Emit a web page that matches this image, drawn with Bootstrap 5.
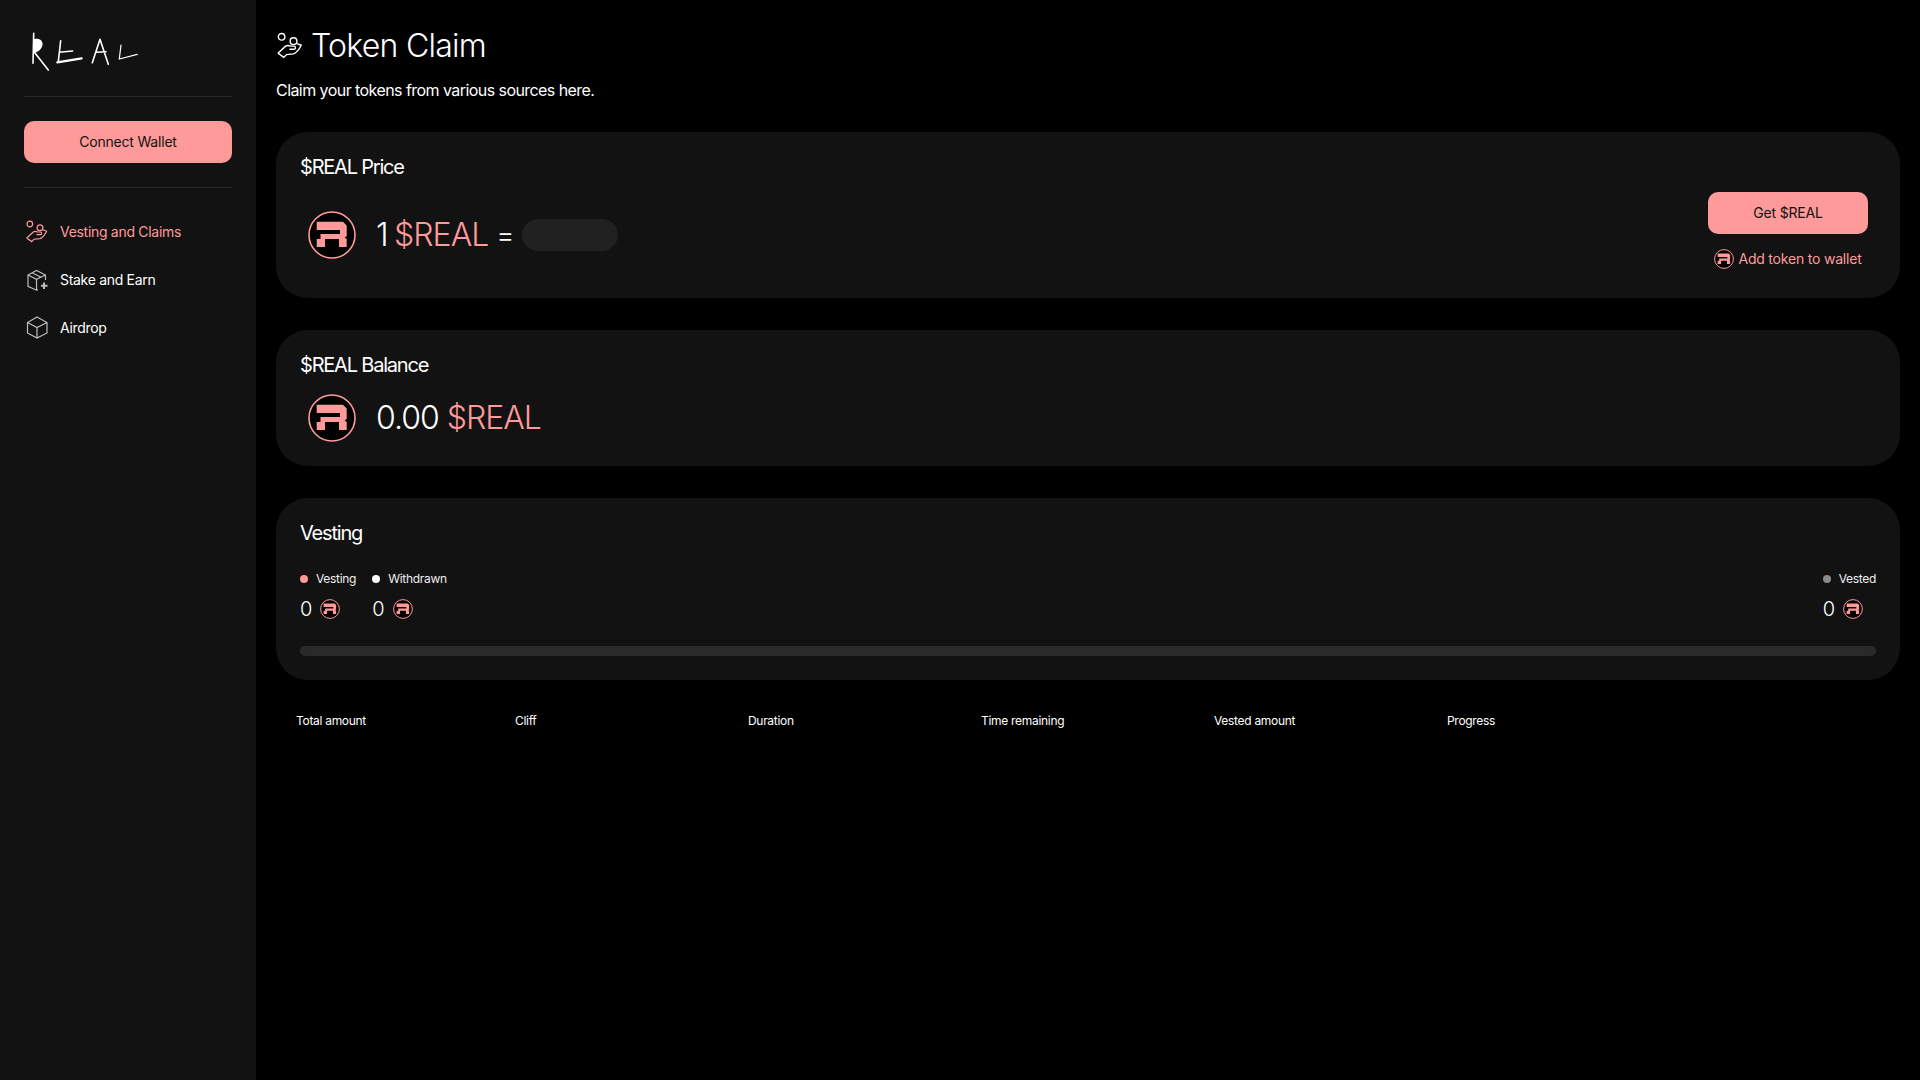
<!DOCTYPE html>
<html lang="en">
<head>
<meta charset="utf-8">
<title>Token Claim</title>
<link href="https://cdn.jsdelivr.net/npm/bootstrap@5.3.0/dist/css/bootstrap.min.css" rel="stylesheet">
<style>
:root { --pink: #ff9a9a; --panel: #121212; }
html, body { background: #000; color: #fff; font-family: Inter, "Liberation Sans", sans-serif; height: 100%; }
.shell { min-height: 1080px; }
.side { width: 256px; flex: 0 0 256px; background: var(--panel); padding: 24px; }
.side-logo { height: 72px; }
.side-logo svg { display: block; margin-top: 3px; }
.side-rule { border-top: 1px solid #2a2a2a; height: 0; }
.btn-pink { background: var(--pink); color: #121212; border: 0; border-radius: 10px; height: 42px; font-size: 14px; letter-spacing: -.2px; display: flex; align-items: center; justify-content: center; padding-bottom: 7px; }
.btn-pink:hover { background: var(--pink); color: #121212; }
.side-btn { margin: 24px 0; width: 208px; }
.side-nav { padding-top: 29px; gap: 20px; }
.side-link { display: flex; align-items: center; gap: 11px; height: 28px; padding-left: 1px; color: #fff; font-size: 14px; letter-spacing: -.3px; text-decoration: none; }
.side-link.on { color: var(--pink); }
.side-link svg { width: 24px; height: 24px; flex: none; fill: none; stroke: #bdbdbd; stroke-width: 1.2; }
.side-link.on svg { stroke: var(--pink); }
.main-col { padding: 0 20px; min-width: 0; }
.page-head { height: 78px; padding-top: 27px; gap: 7px; }
.page-head svg { width: 28px; height: 28px; fill: none; stroke: #fff; stroke-width: 1.2; }
.page-head h1 { font-size: 32px; line-height: 38px; font-weight: 300; letter-spacing: -.75px; margin: 0; }
.page-sub { font-size: 16px; line-height: 24px; letter-spacing: -.56px; margin: 0 0 30px; }
.panel-box { background: var(--panel); border-radius: 32px; padding: 23px 24px 24px; margin-bottom: 32px; }
.price-box { padding-bottom: 29px; }
.box-title { font-size: 20px; line-height: 24px; letter-spacing: -1.2px; margin: 0; font-weight: 400; }
.coin { display: block; flex: none; }
.big-val { font-size: 32px; line-height: 48px; letter-spacing: -1px; font-weight: 300; }
.tight-gap { word-spacing: -1.5px; }
.pink-txt { color: var(--pink); }
.price-row { padding-left: 8px; margin-top: 32px; gap: 20px; }
.eq { font-size: 28px; font-weight: 300; margin: 0 7px 0 8px; }
.skeleton { width: 96px; height: 32px; border-radius: 16px; background: #212121; }
.buy-col { width: 160px; margin-right: 8px; margin-top: 37px; }
.buy-btn { width: 160px; }
.add-link { color: var(--pink); font-size: 14px; letter-spacing: -.2px; text-decoration: none; display: flex; gap: 4px; align-items: center; justify-content: center; margin-top: 14px; white-space: nowrap; }
.bal-row { padding-left: 8px; margin-top: 17px; gap: 20px; }
.legend-lab { font-size: 12px; line-height: 16px; letter-spacing: -.3px; color: #eee; display: flex; align-items: center; gap: 8px; }
.dot { width: 8px; height: 8px; border-radius: 50%; display: block; }
.dot-v { background: var(--pink); }
.dot-w { background: #fff; }
.dot-g { background: #8a8a8a; }
.legend-val { font-size: 20px; line-height: 24px; font-weight: 300; display: flex; align-items: center; gap: 8px; margin-top: 10px; }
.vest-top { margin-top: 26px; }
.vest-items { gap: 16px; }
.track { height: 10px; border-radius: 5px; background: #2a2a2a; margin-top: 25px; }
.claims { --bs-table-bg: transparent; --bs-table-color: #fff; table-layout: fixed; width: 100%; margin: 0; }
.claims th { font-size: 12px; font-weight: 400; letter-spacing: -.3px; padding: 0 0 0 20px; border: 0; line-height: 16px; }
.vest-box { margin-bottom: 0; }
.table-wrap { padding-top: 33px; }
.w1 { width: 219px; } .w2 { width: 233px; }
</style>
</head>
<body>
<svg width="0" height="0" class="d-block" aria-hidden="true">
  <symbol id="coin" viewBox="0 0 48 48">
    <circle cx="24" cy="24" r="23" fill="#000" stroke="#ff9a9a" stroke-width="1.6"/>
    <path fill="#ff9a9a" d="M8.700 10.700H35L38.700 14.500V25L36.700 26.500L38.700 28V36H31V28H17V36H8.700V28H12.500V23H32V19H8.700Z"/>
  </symbol>
  <symbol id="coin-s" viewBox="0 0 48 48">
    <circle cx="24" cy="24" r="22.500" fill="#000" stroke="#ff9a9a" stroke-width="2.400"/>
    <path fill="#ff9a9a" d="M8.700 10.700H35L38.700 14.500V25L36.700 26.500L38.700 28V36H31V28H17V36H8.700V28H12.500V23H32V19H8.700Z"/>
  </symbol>
  <symbol id="hand" viewBox="0 0 24 24">
    <circle cx="4.800" cy="5" r="2.800"/>
    <circle cx="15" cy="8.700" r="2.900"/>
    <path d="M1.700 19L8 13.200C9.500 12 11 12.200 12.500 13H15.500C17 13 17 15.600 15.500 15.600H11.500M18 10.800L21.600 12.200C20 15.500 18 18.500 15 19.600L9 20.200L6.700 22.600L1.700 19"/>
  </symbol>
  <symbol id="boxplus" viewBox="0 0 24 24">
    <path d="M13 22.600L11.500 23.200L3 19.400V8L11.500 3.400L20.500 8V13M3 8L11.500 12.400L20.500 8M11.500 12.400V23M7 5.800L16 10.200"/>
    <path stroke-width="2" d="M19 15.500V22M16 18.800H22.500"/>
  </symbol>
  <symbol id="box" viewBox="0 0 24 24">
    <path d="M12 2L22 7.500V18L12 23L2.500 18V7.500ZM2.500 7.500L12 12.500L22 7.500M12 12.500V23"/>
  </symbol>
</svg>
<div class="d-flex shell">
  <aside class="side d-flex flex-column">
    <div class="side-logo">
      <svg width="120" height="60" viewBox="24 27 120 60" fill="none" stroke="#fff" stroke-linecap="round" aria-label="REAL">
        <path stroke-width="1.600" d="M33.700 33.300L33 63.300M34 51.700L48.300 70"/>
        <path fill="#fff" stroke="none" d="M34 39C40 38 43 41 42.500 45C42 49 38 52 34 53Z"/>
        <path stroke-width="1.600" d="M60.700 40.700L58.300 61.700M59.300 52.300L72.700 51"/>
        <path stroke-width="2.200" d="M57.300 62.300L81.700 58.300"/>
        <path stroke-width="1.600" d="M100 39.300L92.300 62.700M100 39.300L108.300 64.300M96 52.300L106 51.700"/>
        <path stroke-width="1.200" d="M121 45L119.300 59L137.300 54.300"/>
      </svg>
    </div>
    <div class="side-rule"></div>
    <button class="btn btn-pink side-btn" type="button">Connect Wallet</button>
    <div class="side-rule"></div>
    <nav class="d-flex flex-column side-nav">
      <a class="side-link on" href="#"><svg><use href="#hand"/></svg>Vesting and Claims</a>
      <a class="side-link" href="#"><svg><use href="#boxplus"/></svg>Stake and Earn</a>
      <a class="side-link" href="#"><svg><use href="#box"/></svg>Airdrop</a>
    </nav>
  </aside>
  <main class="flex-grow-1 main-col">
    <div class="d-flex align-items-start page-head">
      <svg class="mt-1"><use href="#hand"/></svg>
      <h1>Token Claim</h1>
    </div>
    <p class="page-sub">Claim your tokens from various sources here.</p>

    <section class="panel-box price-box d-flex justify-content-between">
      <div>
        <h2 class="box-title">$REAL Price</h2>
        <div class="d-flex align-items-center price-row">
          <svg class="coin" width="48" height="48"><use href="#coin"/></svg>
          <div class="d-flex align-items-center">
            <span class="big-val tight-gap">1 <span class="pink-txt">$REAL</span></span>
            <span class="eq">=</span>
            <span class="skeleton"></span>
          </div>
        </div>
      </div>
      <div class="buy-col">
        <button class="btn btn-pink buy-btn" type="button">Get $REAL</button>
        <a class="add-link" href="#"><svg class="coin" width="20" height="20"><use href="#coin-s"/></svg>Add token to wallet</a>
      </div>
    </section>

    <section class="panel-box">
      <h2 class="box-title">$REAL Balance</h2>
      <div class="d-flex align-items-center bal-row">
        <svg class="coin" width="48" height="48"><use href="#coin"/></svg>
        <span class="big-val">0.00 <span class="pink-txt">$REAL</span></span>
      </div>
    </section>

    <section class="panel-box vest-box">
      <h2 class="box-title">Vesting</h2>
      <div class="d-flex justify-content-between vest-top">
        <div class="d-flex vest-items">
          <div>
            <div class="legend-lab"><span class="dot dot-v"></span>Vesting</div>
            <div class="legend-val">0<svg class="coin" width="20" height="20"><use href="#coin-s"/></svg></div>
          </div>
          <div>
            <div class="legend-lab"><span class="dot dot-w"></span>Withdrawn</div>
            <div class="legend-val">0<svg class="coin" width="20" height="20"><use href="#coin-s"/></svg></div>
          </div>
        </div>
        <div>
          <div class="legend-lab"><span class="dot dot-g"></span>Vested</div>
          <div class="legend-val">0<svg class="coin" width="20" height="20"><use href="#coin-s"/></svg></div>
        </div>
      </div>
      <div class="track"></div>
    </section>

    <div class="table-wrap">
      <table class="table claims">
        <colgroup><col class="w1"><col class="w2"><col class="w2"><col class="w2"><col class="w2"><col class="w2"><col></colgroup>
        <thead><tr><th>Total amount</th><th>Cliff</th><th>Duration</th><th>Time remaining</th><th>Vested amount</th><th>Progress</th><th></th></tr></thead>
      </table>
    </div>
  </main>
</div>
<script src="https://cdn.jsdelivr.net/npm/bootstrap@5.3.0/dist/js/bootstrap.bundle.min.js"></script>
</body>
</html>
